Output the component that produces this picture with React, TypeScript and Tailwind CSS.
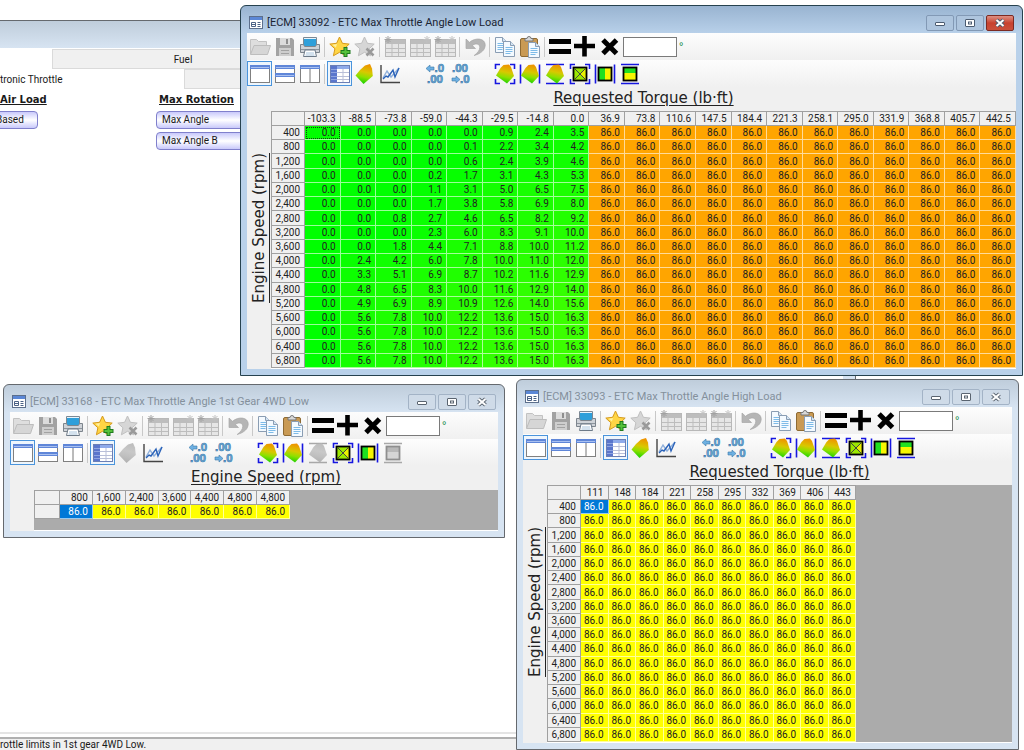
import type { ReactNode } from 'react'

const rpm = [400, 800, 1200, 1600, 2000, 2400, 2800, 3200, 3600, 4000, 4400, 4800, 5200, 5600, 6000, 6400, 6800]

const lowLoadTorque = [
  '-103.3', '-88.5', '-73.8', '-59.0', '-44.3', '-29.5', '-14.8', '0.0', '36.9', '73.8',
  '110.6', '147.5', '184.4', '221.3', '258.1', '295.0', '331.9', '368.8', '405.7', '442.5',
]

// Only the first eight columns vary, every column above 0 lb·ft is 86.0
const lowLoadAngles = [
  [0, 0, 0, 0, 0, 0.9, 2.4, 3.5],
  [0, 0, 0, 0, 0.1, 2.2, 3.4, 4.2],
  [0, 0, 0, 0, 0.6, 2.4, 3.9, 4.6],
  [0, 0, 0, 0.2, 1.7, 3.1, 4.3, 5.3],
  [0, 0, 0, 1.1, 3.1, 5, 6.5, 7.5],
  [0, 0, 0, 1.7, 3.8, 5.8, 6.9, 8],
  [0, 0, 0.8, 2.7, 4.6, 6.5, 8.2, 9.2],
  [0, 0, 0, 2.3, 6, 8.3, 9.1, 10],
  [0, 0, 1.8, 4.4, 7.1, 8.8, 10, 11.2],
  [0, 2.4, 4.2, 6, 7.8, 10, 11, 12],
  [0, 3.3, 5.1, 6.9, 8.7, 10.2, 11.6, 12.9],
  [0, 4.8, 6.5, 8.3, 10, 11.6, 12.9, 14],
  [0, 4.9, 6.9, 8.9, 10.9, 12.6, 14, 15.6],
  [0, 5.6, 7.8, 10, 12.2, 13.6, 15, 16.3],
  [0, 5.6, 7.8, 10, 12.2, 13.6, 15, 16.3],
  [0, 5.6, 7.8, 10, 12.2, 13.6, 15, 16.3],
  [0, 5.6, 7.8, 10, 12.2, 13.6, 15, 16.3],
].map(row => [...row, ...Array(12).fill(86)])

const highLoadTorque = ['111', '148', '184', '221', '258', '295', '332', '369', '406', '443']
const highLoadAngles = rpm.map(() => Array(10).fill(86) as number[])

const firstGearRpm = ['800', '1,600', '2,400', '3,600', '4,400', '4,800', '4,800']
const firstGearAngles = [Array(7).fill(86) as number[]]

const heatColor = (value: number) => (value >= 86 ? '#ffa500' : `rgb(${Math.round(value * 3.7)}, 255, 0)`)

const Svg = ({ children }: { children: ReactNode }) => (
  <svg width="22" height="22" viewBox="0 0 22 22" fill="none" aria-hidden="true">
    {children}
  </svg>
)

/* ---------- toolbar icons ---------- */

const FolderIcon = () => (
  <Svg>
    <path d="M1.500 18V3.500h6l2 2h8V10" fill="#dedede" stroke="#c2c2c2" />
    <path d="M1.500 18.500 5 9.500h16.500l-3 9z" fill="#d6d6d6" stroke="#bdbdbd" />
  </Svg>
)

const SaveIcon = () => (
  <Svg>
    <path d="M2 2h16l2 2v16H2z" fill="#a2a2a2" />
    <rect x="6" y="2" width="10" height="7" fill="#dcdcdc" />
    <rect x="12" y="3" width="2" height="5" fill="#8e8e8e" />
    <rect x="5" y="12" width="12" height="8" fill="#cecece" />
    <path d="M7 14.500h8M7 17.500h8" stroke="#a2a2a2" />
  </Svg>
)

const PrinterIcon = () => (
  <Svg>
    <path d="M4.500 9V1.500h13V9" fill="#e8f4fc" stroke="#7b8894" />
    <rect x="5" y="3" width="12" height="7" fill="#2e9fda" />
    <path d="M1.500 8.500h3l1 2h11l1-2h3v8h-19z" fill="#cfd3d8" stroke="#7d858d" />
    <path d="M2 13.500h18" stroke="#8d959d" />
    <path d="M6 14h10l1.500 6.500h-13z" fill="#fff" stroke="#6d7a88" />
    <path d="M7 17h8M6.500 19h9" stroke="#a8c4dc" />
  </Svg>
)

const starPath = 'M10.500 1l2.900 6.300 6.800.8-5.100 4.700 1.500 7L10.500 16.300l-6.100 3.500 1.500-7L.8 8.100l6.800-.8z'

const StarAddIcon = () => (
  <Svg>
    <path d={starPath} fill="#ffd544" stroke="#d69a1c" />
    <path d="M9.500 3.500 8 8l-4.600.8 3.500 2.800z" fill="#fff0a0" />
    <path d="M16.500 11v10M11.500 16h10" stroke="#1f7a1f" strokeWidth="4" />
    <path d="M16.500 12v8M12.500 16h8" stroke="#55c23a" strokeWidth="2" />
  </Svg>
)

const StarRemoveIcon = () => (
  <Svg>
    <path d={starPath} fill="#d6d6d6" stroke="#c0c0c0" />
    <path d="m12.500 12.500 7 7m0-7-7 7" stroke="#9a9a9a" strokeWidth="2.600" />
  </Svg>
)

const SheetIcon = ({ left, right }: { left?: boolean; right?: boolean }) => (
  <Svg>
    <rect x="1.500" y="3.500" width="20" height="17" fill="#e6e6e6" stroke="#b8b8b8" />
    <rect x="2" y="4" width="19" height="4" fill="#bdbdbd" />
    <path d="M8 8v12M14.500 8v12M2 12.500h19M2 16.500h19" stroke="#bdbdbd" />
    {left && <path d="M4 0v7M.5 3.500h7M1.500 1l5 5m0-5-5 5" stroke="#a2a2a2" />}
    {right && <path d="M18 0v7M14.500 3.500h7M15.500 1l5 5m0-5-5 5" stroke="#c0c0c0" />}
  </Svg>
)

const UndoIcon = () => (
  <Svg>
    <path
      d="M2 3v9.500h9.500L8.300 9.600c3-2.700 7.500-2 7.500 1.600 0 3-2 5.500-5.600 8.300 7-2 11-5.700 11-10.500 0-6.700-9.500-8-15.700-2.700z"
      fill="#b5b5b5"
      stroke="#a6a6a6"
      strokeWidth=".7"
    />
  </Svg>
)

const Page = ({ x, y }: { x: number; y: number }) => (
  <g transform={`translate(${x} ${y})`}>
    <path d="M.5.5h7l4 4v11H.5z" fill="#f4faff" stroke="#8a9db3" />
    <path d="M7.500.5v4h4" fill="#d3e4f3" stroke="#8a9db3" />
    <path d="M2.500 6.500h7M2.500 8.500h7M2.500 10.500h7M2.500 12.500h5" stroke="#7dbbe8" />
  </g>
)

const CopyIcon = () => (
  <Svg>
    <Page x={1} y={1} />
    <Page x={9} y={5} />
  </Svg>
)

const PasteIcon = () => (
  <Svg>
    <rect x="1.500" y="2.500" width="17" height="18" rx="1.500" fill="#c99a54" stroke="#8e6a33" />
    <path d="M6 5V2.500h2a2 2 0 0 1 4 0h2V5z" fill="#d8d8d8" stroke="#777" />
    <Page x={9} y={6} />
  </Svg>
)

const EqualsIcon = () => (
  <Svg>
    <path d="M0 5.500h22M0 15.500h22" stroke="#000" strokeWidth="5" />
  </Svg>
)

const PlusIcon = () => (
  <Svg>
    <path d="M10.500 0v20.500M0 10h21" stroke="#000" strokeWidth="4.600" />
  </Svg>
)

const TimesIcon = () => (
  <Svg>
    <path d="m4 4 13.500 13.500M17.500 4 4 17.500" stroke="#000" strokeWidth="5" />
  </Svg>
)

const PaneIcon = ({ split }: { split?: 'rows' | 'cols' }) => (
  <Svg>
    <rect x="1.500" y="2.500" width="19" height="17" fill="#fff" stroke="#808080" />
    <rect x="1" y="2" width="20" height="4" fill="#5f86d8" />
    <path d="M2 4.500h18" stroke="#a9c0f0" />
    {split === 'rows' && <rect x="1" y="10" width="20" height="4" fill="#5f86d8" />}
    {split === 'rows' && <path d="M2 12.500h18" stroke="#a9c0f0" />}
    {split === 'cols' && <path d="M11 6v13.500" stroke="#777" />}
  </Svg>
)

const TableIcon = () => (
  <Svg>
    <rect x="1.500" y="2.500" width="19" height="17" fill="#fff" stroke="#6b7fb5" />
    <rect x="2" y="3" width="18" height="3" fill="#8fabea" />
    <rect x="2" y="3" width="6" height="16" fill="#5a76cc" />
    <path d="M2 6.500h6M2 9.500h6M2 13.500h6M2 16.500h6" stroke="#8fa4e0" />
    <path d="M14 6v13M8 9.500h12M8 13.500h12M8 16.500h12" stroke="#b9bfd8" />
  </Svg>
)

const Surface = ({ gray, d }: { gray?: boolean; d: string }) => (
  <>
    <defs>
      <linearGradient id={gray ? 'surfaceGray' : 'surface'} x1=".6" y1="0" x2=".4" y2="1">
        <stop offset="0" stopColor={gray ? '#bdbdbd' : '#f09000'} />
        <stop offset=".4" stopColor={gray ? '#c8c8c8' : '#d8c800'} />
        <stop offset=".65" stopColor={gray ? '#c0c0c0' : '#8fe000'} />
        <stop offset="1" stopColor={gray ? '#b0b0b0' : '#12d000'} />
      </linearGradient>
    </defs>
    <path d={d} fill={gray ? 'url(#surfaceGray)' : 'url(#surface)'} />
  </>
)

const SurfaceIcon = ({ gray }: { gray?: boolean }) => (
  <Svg>
    <Surface gray={gray} d="M1.500 12.500 6 7 11 2.500 16 1l2 4.500.8 7.500-9.300 8z" />
  </Svg>
)

const ChartIcon = () => (
  <Svg>
    <path d="M2 2v17.500h19" stroke="#444" strokeWidth="1.400" />
    <path d="m4 15 4-7 4 6 8-9" stroke="#8fb0dc" strokeWidth="1.400" />
    <path d="m4 16 3-3 2 1 5-7 2 7 4-9" stroke="#2a62b8" strokeWidth="1.400" />
  </Svg>
)

const DecimalsIcon = ({ more }: { more?: boolean }) => (
  <Svg>
    <g fill="#6db0e2" stroke="#3c78a8" strokeWidth=".6" fontFamily="Liberation Sans" fontWeight="bold" fontSize="11.500">
      <text x={more ? 10.500 : 3} y="9">{more ? '.0' : '.00'}</text>
      <text x={more ? 3 : 11} y="20">{more ? '.00' : '.0'}</text>
      <path d={more ? 'M2 5.500l4-3.500v2h4v3H6v2z' : 'M11 16.500 7 13v2H3v3h4v2z'} />
    </g>
  </Svg>
)

const corners = 'M1.500 6V1.500H6M16 1.500h4.500V6M20.500 16v4.500H16M6 20.500H1.500V16'
const sides = 'M1.500 1.500v19M20.500 1.500v19'
const caps = 'M2 1.500h18M2 20.500h18'

const SurfaceFitIcon = ({ marks, gray }: { marks: string; gray?: boolean }) => (
  <Svg>
    <path d={marks} stroke={gray ? '#a8a8a8' : '#1616e0'} strokeWidth="1.600" />
    <Surface gray={gray} d="M2 12.500 6.500 5 9.500 2 15 1.500 17 4l3 9-7 7.500z" />
  </Svg>
)

const CellFitIcon = ({ mode, gray }: { mode: 'both' | 'cols' | 'rows'; gray?: boolean }) => (
  <Svg>
    <rect x="4" y="4" width="14" height="14" fill={gray ? '#d5d5d5' : '#f6f600'} />
    {mode === 'both' && <path d="M4 4h14v14H4z" fill="#9be800" />}
    {mode === 'both' && <path d="M11 11 17 5v12z" fill="#e8f000" />}
    {mode === 'cols' && <rect x="5" y="5" width="6" height="12" fill="#20e020" />}
    {mode === 'rows' && <rect x="5" y="5" width="12" height="5" fill={gray ? '#b8b8b8' : '#20e020'} />}
    <rect x="4.500" y="4.500" width="13" height="13" stroke={gray ? '#8e8e8e' : '#000'} strokeWidth="1.800" />
    {mode === 'both' && <path d="m6 6 10 10M16 6 6 16" stroke="#444" />}
    <path
      d={mode === 'both' ? corners : mode === 'cols' ? sides : caps}
      stroke={gray ? '#a8a8a8' : '#1616e0'}
      strokeWidth="1.600"
    />
  </Svg>
)

/* ---------- toolbar ---------- */

function ToolButton({ label, selected, children }: { label: string; selected?: boolean; children: ReactNode }) {
  return (
    <button
      aria-label={label}
      className={`flex h-[25px] w-[25px] items-center justify-center ${
        selected ? 'border border-[#4a94dc] bg-[#eef6fd]' : ''
      }`}
    >
      {children}
    </button>
  )
}

const Separator = () => <span className="mx-0.5 h-5 w-px bg-[#c8c8c8]" />

const barClass = 'flex h-[27px] items-center bg-gradient-to-b from-[#fdfdfd] to-[#f0f0f0]'

function Toolbars({ singleRow }: { singleRow?: boolean }) {
  return (
    <>
      <div className={barClass}>
        <ToolButton label="Open"><FolderIcon /></ToolButton>
        <ToolButton label="Save"><SaveIcon /></ToolButton>
        <ToolButton label="Print"><PrinterIcon /></ToolButton>
        <Separator />
        <ToolButton label="Add favorite"><StarAddIcon /></ToolButton>
        <ToolButton label="Remove favorite"><StarRemoveIcon /></ToolButton>
        <Separator />
        <ToolButton label="Column axis"><SheetIcon left /></ToolButton>
        <ToolButton label="Row axis"><SheetIcon right /></ToolButton>
        <ToolButton label="Both axes"><SheetIcon left right /></ToolButton>
        <Separator />
        <ToolButton label="Undo"><UndoIcon /></ToolButton>
        <Separator />
        <ToolButton label="Copy"><CopyIcon /></ToolButton>
        <ToolButton label="Paste"><PasteIcon /></ToolButton>
        <Separator />
        <ToolButton label="Set value"><EqualsIcon /></ToolButton>
        <ToolButton label="Add value"><PlusIcon /></ToolButton>
        <ToolButton label="Multiply value"><TimesIcon /></ToolButton>
        <input aria-label="Value" className="ml-px h-5 w-[54px] border border-[#7a7a7a] bg-white px-1 text-[11px]" />
        <span className="ml-0.5 font-['Liberation_Sans',sans-serif] text-[11px] text-green-700">°</span>
      </div>
      <div className={barClass}>
        <ToolButton label="Single pane" selected><PaneIcon /></ToolButton>
        <ToolButton label="Split rows"><PaneIcon split="rows" /></ToolButton>
        <ToolButton label="Split columns"><PaneIcon split="cols" /></ToolButton>
        <Separator />
        <ToolButton label="Table" selected><TableIcon /></ToolButton>
        <ToolButton label="Surface"><SurfaceIcon gray={singleRow} /></ToolButton>
        <ToolButton label="Chart"><ChartIcon /></ToolButton>
        <div className="mx-5 flex">
          <ToolButton label="More decimals"><DecimalsIcon more /></ToolButton>
          <ToolButton label="Fewer decimals"><DecimalsIcon /></ToolButton>
        </div>
        <ToolButton label="Smooth surface"><SurfaceFitIcon marks={corners} /></ToolButton>
        <ToolButton label="Smooth across"><SurfaceFitIcon marks={sides} /></ToolButton>
        <ToolButton label="Smooth down"><SurfaceFitIcon marks={caps} gray={singleRow} /></ToolButton>
        <ToolButton label="Interpolate area"><CellFitIcon mode="both" /></ToolButton>
        <ToolButton label="Interpolate across"><CellFitIcon mode="cols" /></ToolButton>
        <ToolButton label="Interpolate down"><CellFitIcon mode="rows" gray={singleRow} /></ToolButton>
      </div>
    </>
  )
}

/* ---------- table window ---------- */

function CaptionButtons({ active }: { active?: boolean }) {
  const glyph = active ? '#4b5b70' : '#5a6470'
  const base = 'flex h-4 w-7 items-center justify-center rounded-xs border'
  const plain = active ? 'border-[#8299b5] bg-[#aec5de]' : 'border-[#a3b3c6] bg-[#cfdbe8]'
  return (
    <div className="flex gap-0.5">
      <button aria-label="Minimize" className={`${base} ${plain}`}>
        <svg width="12" height="10" viewBox="0 0 12 10" aria-hidden="true">
          <rect x="1.500" y="4.500" width="9" height="3" rx=".5" fill="#fff" stroke={glyph} />
        </svg>
      </button>
      <button aria-label="Maximize" className={`${base} ${plain}`}>
        <svg width="12" height="10" viewBox="0 0 12 10" aria-hidden="true">
          <rect x="1.500" y="1.500" width="9" height="7" rx=".5" fill="#fff" stroke={glyph} />
          <rect x="4.500" y="4" width="3" height="2" fill="#fff" stroke={glyph} />
        </svg>
      </button>
      <button
        aria-label="Close"
        className={`${base} ${active ? 'border-[#7c2a22] bg-gradient-to-b from-[#dd8f83] via-[#c8412f] to-[#c9503c]' : plain}`}
      >
        <svg width="12" height="10" viewBox="0 0 12 10" aria-hidden="true">
          <path d="m2.500 2 7 6M9.500 2l-7 6" stroke={glyph} strokeWidth="3.800" />
          <path d="m2.500 2 7 6M9.500 2l-7 6" stroke="#fff" strokeWidth="2" />
        </svg>
      </button>
    </div>
  )
}

interface TableWindowProps {
  title: string
  place: string
  active?: boolean
  topAxis: string
  sideAxis?: string
  columns: string[]
  rows: string[]
  data: number[][]
  tableClass: string
  headClass: string
  heat?: boolean
}

function TableWindow({ title, place, active, topAxis, sideAxis, columns, rows, data, tableClass, headClass, heat }: TableWindowProps) {
  return (
    <section
      className={`absolute rounded-t-md border px-1.5 pb-1.5 ${place} ${
        active
          ? 'border-[#26424f] bg-[#b9d1ea] bg-gradient-to-b from-[#99b4d1] to-[#b9d1ea] to-[28px]'
          : 'border-[#65696e] bg-[#d7e4f2] bg-gradient-to-b from-[#bfcddb] to-[#d7e4f2] to-[28px]'
      }`}
    >
      <header className="flex h-[27px] items-center px-0.5 pt-1.5">
        <svg width="14" height="13" viewBox="0 0 14 13" className="mr-1 shrink-0" aria-hidden="true">
          <rect x=".5" y=".5" width="13" height="12" fill="#fff" stroke="#5c6f8c" />
          <rect x="1" y="1" width="12" height="3" fill="#5b87d6" />
          <path d="M2.500 6.500h4v4h-4zM8.500 6.500h3M8.500 8.500h3M8.500 10.500h3M3 8.500h3" fill="none" stroke="#4a6185" />
        </svg>
        <h2
          className={`min-w-0 flex-1 truncate font-['Roboto',sans-serif] text-[11px] leading-4 ${
            active ? 'text-[#1a2433]' : 'text-[#84909c]'
          }`}
        >
          {title}
        </h2>
        <CaptionButtons active={active} />
      </header>

      <div className="bg-[#f0f0f0]">
        <Toolbars singleRow={!sideAxis} />
        <div className="flex">
          <div className="flex w-6 shrink-0 items-center justify-center">
            {sideAxis && (
              <span className="rotate-180 font-['DejaVu_Sans',sans-serif] text-[15px] leading-5 whitespace-nowrap text-[#222] underline underline-offset-2 [writing-mode:vertical-rl]">
                {sideAxis}
              </span>
            )}
          </div>
          <div className="min-w-0 flex-1">
            <h3 className="h-6 text-center font-['DejaVu_Sans',sans-serif] text-[15px] leading-[22px] text-[#222] underline underline-offset-2">
              {topAxis}
            </h3>
            <div className={`border-b border-white bg-[#ababab] ${sideAxis ? '' : 'pb-[11px]'}`}>
              <table
                className={`table-fixed border-separate border-spacing-0 border-t border-l border-[#a0a0a0] text-right font-['Roboto',sans-serif] text-[10px] leading-[13px] text-[#222] ${tableClass}`}
              >
                <thead>
                  <tr>
                    <td className={`border-r border-b border-[#a0a0a0] bg-[#f0f0f0] p-0 ${headClass}`} />
                    {columns.map((column, i) => (
                      <th key={i} scope="col" className="border-r border-b border-[#a0a0a0] bg-[#f0f0f0] p-0 pr-1 font-normal">
                        {column}
                      </th>
                    ))}
                  </tr>
                </thead>
                <tbody>
                  {data.map((row, r) => (
                    <tr key={r}>
                      <th scope="row" className="border-r border-b border-[#a0a0a0] bg-[#f0f0f0] p-0 pr-1 font-normal">
                        {rows[r]}
                      </th>
                      {row.map((value, c) => {
                        const current = r === 0 && c === 0
                        return (
                          <td
                            key={c}
                            style={heat ? { backgroundColor: heatColor(value) } : undefined}
                            className={`border-r border-b border-white/60 p-0 pr-1 ${
                              current && !heat ? 'bg-[#0078d7] text-white' : 'bg-[#ffff00]'
                            } ${current && heat ? 'outline -outline-offset-2 outline-dotted outline-[#104010]' : ''}`}
                          >
                            {value.toFixed(1)}
                          </td>
                        )
                      })}
                    </tr>
                  ))}
                </tbody>
              </table>
            </div>
          </div>
        </div>
      </div>
    </section>
  )
}

/* ---------- window behind the tables ---------- */

const mapButton =
  'h-[18px] rounded-sm border border-[#8080cc] bg-gradient-to-b from-[#c9c9fa] via-white to-[#c9c9fa] px-[5px] text-left leading-4'

function MainWindow() {
  return (
    <main className="absolute top-5 bottom-0 left-0 flex w-[856px] flex-col border-t border-r border-[#65696e] bg-[#d7e4f2] pr-3 font-['Roboto',sans-serif] text-[10px] text-[#1a1a1a]">
      <div className="h-[27px] bg-gradient-to-b from-[#bfcddb] to-[#d7e4f2]" />
      <div className="flex flex-1 flex-col bg-white">
        <nav>
          <div className="flex h-[21px] pt-px">
            <span className="w-[52px]" />
            <button className="w-[262px] border border-[#dadada] bg-[#f0f0f0]">Fuel</button>
            <span className="flex-1 border border-[#dadada] bg-[#f0f0f0]" />
          </div>
          <div className="flex h-5">
            <button className="w-[184px] text-left">tronic Throttle</button>
            <span className="flex-1 border border-[#dadada] bg-[#f0f0f0]" />
          </div>
        </nav>
        <div className="flex pt-[3px]">
          <div className="flex w-[156px] flex-col items-start gap-[3px]">
            <h3 className="font-['DejaVu_Sans',sans-serif] leading-4 font-bold underline">Air Load</h3>
            <button className={`${mapButton} -ml-2.5 w-12`}>Based</button>
          </div>
          <div className="flex w-[120px] flex-col gap-[3px]">
            <h3 className="pl-[3px] font-['DejaVu_Sans',sans-serif] leading-4 font-bold underline">Max Rotation</h3>
            <button className={mapButton}>Max Angle</button>
            <button className={mapButton}>Max Angle B</button>
          </div>
        </div>
      </div>
      <footer className="border-t-2 border-[#e4e4e4] bg-white pt-[3px]">
        <p className="border-t-2 border-[#b0b0b0] bg-[#f0f0f0] leading-[11px]">
          rottle limits in 1st gear 4WD Low.
        </p>
      </footer>
    </main>
  )
}

export default function App() {
  const rpmLabels = rpm.map(speed => speed.toLocaleString('en-US'))

  return (
    <div className="relative h-screen w-full overflow-hidden bg-white">
      <MainWindow />
      <TableWindow
        title="[ECM] 33092 - ETC Max Throttle Angle Low Load"
        place="left-[240px] top-[5px] w-[783px]"
        active
        topAxis="Requested Torque (lb·ft)"
        sideAxis="Engine Speed (rpm)"
        columns={lowLoadTorque}
        rows={rpmLabels}
        data={lowLoadAngles}
        tableClass="h-[257px] w-full"
        headClass="w-[33px]"
        heat
      />
      <TableWindow
        title="[ECM] 33168 - ETC Max Throttle Angle 1st Gear 4WD Low"
        place="left-[3px] top-[384px] w-[502px]"
        topAxis="Engine Speed (rpm)"
        columns={firstGearRpm}
        rows={['']}
        data={firstGearAngles}
        tableClass="h-[29px] w-[256px]"
        headClass="w-[25px]"
      />
      <TableWindow
        title="[ECM] 33093 - ETC Max Throttle Angle High Load"
        place="left-[516px] top-[379px] w-[503px]"
        topAxis="Requested Torque (lb·ft)"
        sideAxis="Engine Speed (rpm)"
        columns={highLoadTorque}
        rows={rpmLabels}
        data={highLoadAngles}
        tableClass="h-[257px] w-[309px]"
        headClass="w-[33px]"
      />
    </div>
  )
}
